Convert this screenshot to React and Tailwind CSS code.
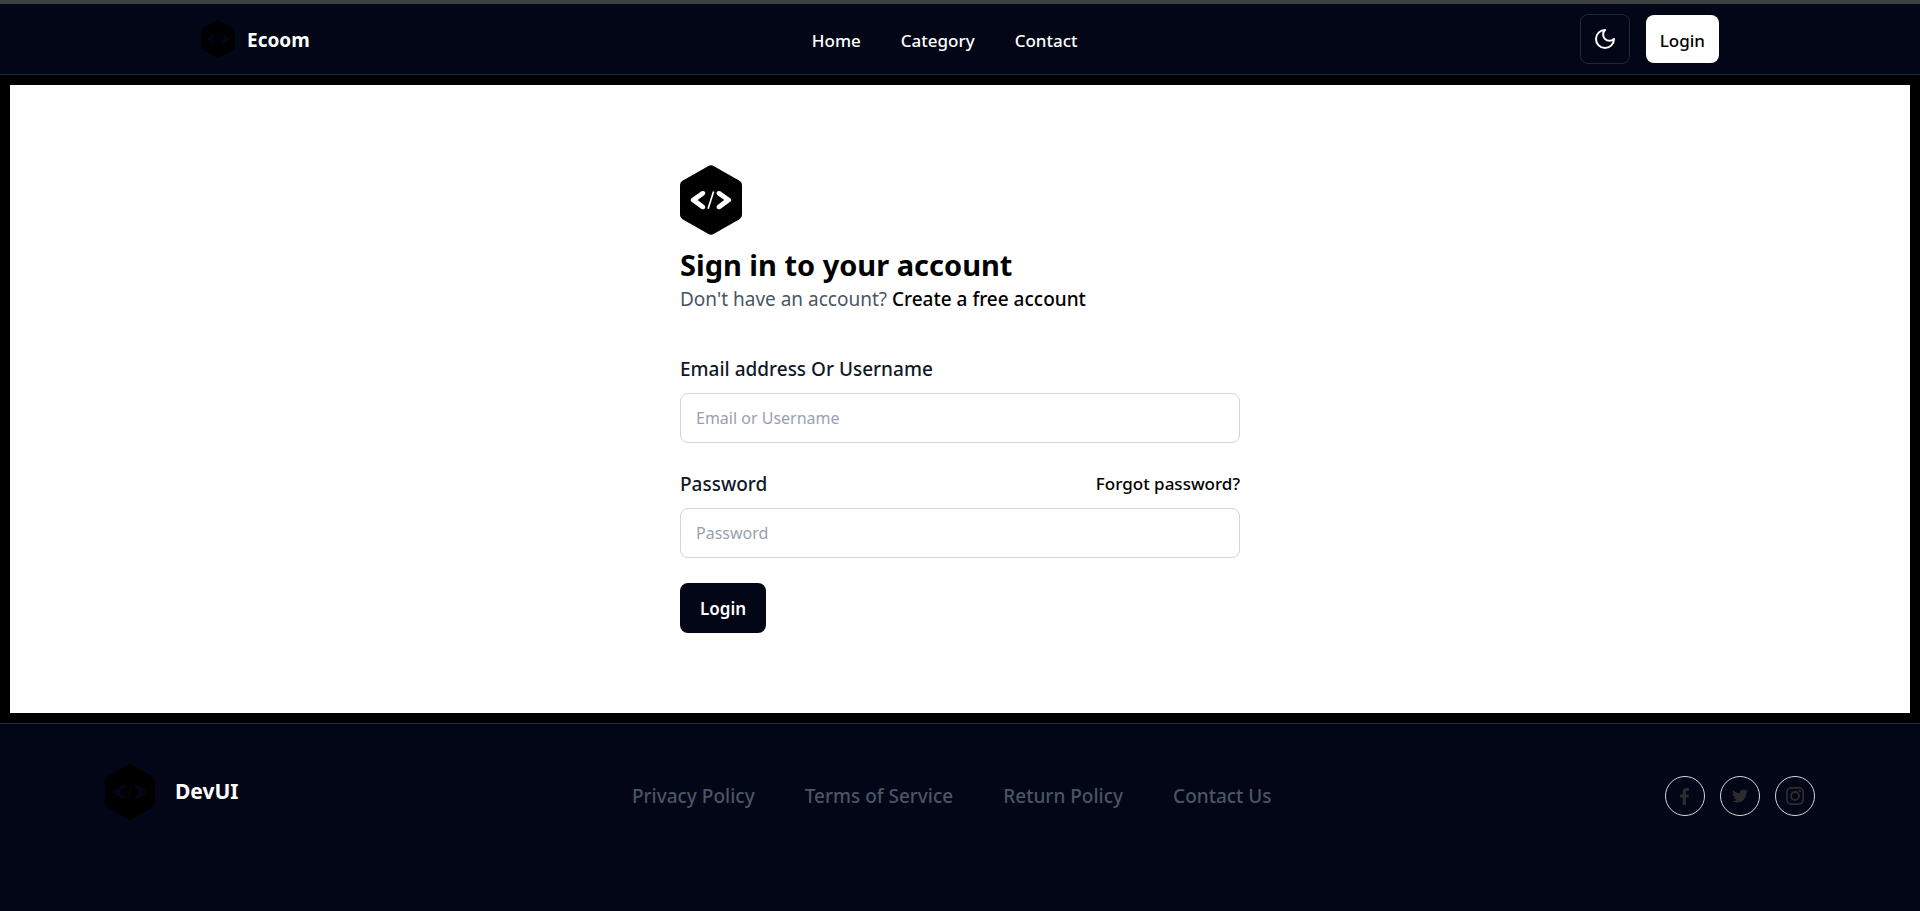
import { FaFacebookF, FaTwitter } from "react-icons/fa";

function Logo({ className }) {
  return (
    <svg viewBox="0 0 62 70" className={className} fill="none" aria-hidden="true">
      <path
        fillRule="evenodd"
        clipRule="evenodd"
        fill="#000"
        d="M28 1.2Q31 -0.6 34 1.2L59.5 15.8Q62 17.2 62 20V50Q62 52.8 59.5 54.2L34 68.8Q31 70.6 28 68.8L2.5 54.2Q0 52.8 0 50V20Q0 17.2 2.5 15.8ZM21.5 26.3L11.6 33.2Q9.6 35 11.6 36.8L21.5 43.9Q23.6 45 25 43.3Q25.8 41.4 24.2 40L17.6 35L24.2 30.2Q25.8 28.6 25 27Q23.6 25.2 21.5 26.3ZM32.8 26.2L27.3 43.6L28.9 44.1L34.4 26.7ZM40.3 26.3Q38.2 25.2 36.8 27Q36 28.6 37.6 30.2L44.2 35L37.6 40Q36 41.4 36.8 43.3Q38.2 45 40.3 43.9L50.2 36.8Q52.2 35 50.2 33.2Z"
      />
    </svg>
  );
}

function MoonIcon() {
  return (
    <svg viewBox="0 0 24 24" className="size-6" fill="none" stroke="currentColor" strokeWidth="2" strokeLinecap="round" strokeLinejoin="round" aria-hidden="true">
      <path d="M12 3a6 6 0 0 0 9 9 9 9 0 1 1-9-9Z" />
    </svg>
  );
}

function InstagramIcon() {
  return (
    <svg viewBox="0 0 20 20" className="size-5" fill="none" stroke="currentColor" strokeWidth="1.8" aria-hidden="true">
      <rect x="1.9" y="1.9" width="16.2" height="16.2" rx="4" />
      <circle cx="10" cy="10" r="4" />
      <circle cx="14.8" cy="5.2" r="1.1" fill="currentColor" stroke="none" />
    </svg>
  );
}

const navLinks = ["Home", "Category", "Contact"];
const footerLinks = ["Privacy Policy", "Terms of Service", "Return Policy", "Contact Us"];
const socials = [
  { name: "Facebook", icon: <FaFacebookF size={17} /> },
  { name: "Twitter", icon: <FaTwitter size={16} /> },
  { name: "Instagram", icon: <InstagramIcon /> },
];

function Header() {
  return (
    <header className="border-t-4 border-b border-t-[#404040] border-b-gray-800 bg-[#020617]">
      <div className="mx-auto flex h-[70px] max-w-[1518px] items-center justify-between text-white">
        <a href="#" className="flex items-center gap-3">
          <Logo className="h-[38px] w-[34px]" />
          <span className="pt-0.5 text-[19px] font-bold">Ecoom</span>
        </a>
        <nav className="flex gap-10 pt-1 text-[17px] font-medium">
          {navLinks.map((label) => (
            <a key={label} href="#">{label}</a>
          ))}
        </nav>
        <div className="flex items-center gap-4">
          <button type="button" aria-label="Toggle theme" className="flex size-[50px] items-center justify-center rounded-lg border border-gray-800">
            <MoonIcon />
          </button>
          <button type="button" className="h-12 rounded-lg bg-white px-3.5 pt-1 text-[17px] font-medium text-black">Login</button>
        </div>
      </div>
    </header>
  );
}

const inputClass =
  "block h-[50px] w-full rounded-lg border border-gray-300 bg-white px-[15px] text-base text-gray-900 placeholder:text-gray-400";

function SignIn() {
  return (
    <main className="border-10 border-black bg-white px-4 pt-20 pb-20">
      <div className="mx-auto max-w-[560px]">
        <Logo className="h-[70px] w-[62px]" />
        <h1 className="mt-2.5 text-[29px] leading-10 font-bold text-black">Sign in to your account</h1>
        <p className="text-[19px] leading-7 text-gray-600">
          Don't have an account?{" "}
          <a href="#" className="font-medium text-black">Create a free account</a>
        </p>
        <form className="mt-10">
          <label htmlFor="email" className="block text-[19px] leading-8 font-medium text-gray-900">Email address Or Username</label>
          <input id="email" type="text" placeholder="Email or Username" className={"mt-2 " + inputClass} />
          <div className="mt-[25px] flex items-center justify-between">
            <label htmlFor="password" className="text-[19px] leading-8 font-medium text-gray-900">Password</label>
            <a href="#" className="text-[17px] font-medium text-black">Forgot password?</a>
          </div>
          <input id="password" type="password" placeholder="Password" className={"mt-2 " + inputClass} />
          <button type="submit" className="mt-[25px] h-[50px] rounded-lg bg-[#020617] px-5 pt-0.5 text-[17px] font-semibold text-white">Login</button>
        </form>
      </div>
    </main>
  );
}

function Footer() {
  return (
    <footer className="grow border-t border-gray-800 bg-[#020617] pt-10">
      <div className="mx-auto flex max-w-[1710px] items-center justify-between">
        <a href="#" className="flex items-center gap-5 text-white">
          <Logo className="h-14 w-[50px]" />
          <span className="text-[21px] font-bold">DevUI</span>
        </a>
        <nav className="flex gap-[50px] pt-2 text-[19px] font-medium text-gray-600">
          {footerLinks.map((label) => (
            <a key={label} href="#">{label}</a>
          ))}
        </nav>
        <div className="flex gap-[15px] pt-2">
          {socials.map(({ name, icon }) => (
            <a key={name} href="#" aria-label={name} className="flex size-10 items-center justify-center rounded-full border border-gray-300 text-[#2c2c2e]">
              {icon}
            </a>
          ))}
        </div>
      </div>
    </footer>
  );
}

export default function App() {
  return (
    <div className="flex min-h-screen flex-col bg-[#020617] font-['Noto_Sans','Open_Sans',sans-serif]">
      <Header />
      <SignIn />
      <Footer />
    </div>
  );
}
